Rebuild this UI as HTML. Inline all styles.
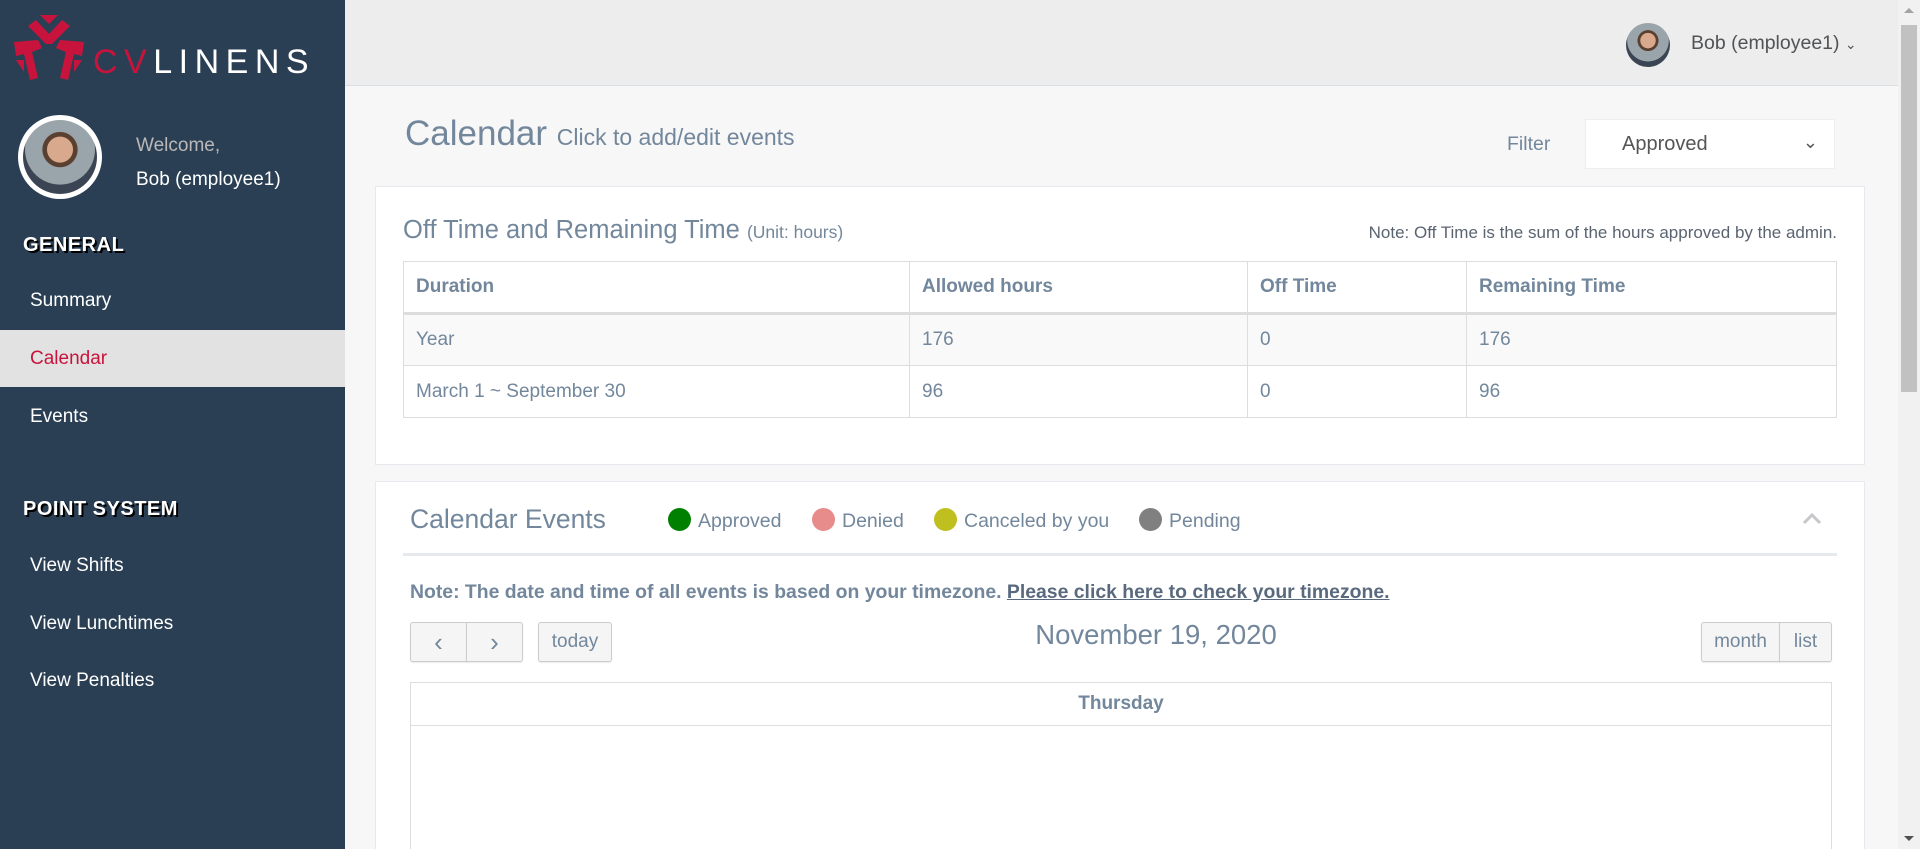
<!DOCTYPE html>
<html><head><meta charset="utf-8"><style>
*{box-sizing:border-box;margin:0;padding:0}
html{overflow:hidden;height:849px}
body{width:1920px;height:849px;overflow:hidden;font-family:"Liberation Sans",Arial,sans-serif;background:#f7f7f7;position:relative;color:#73879c}
.abs{position:absolute}
#side{left:0;top:0;width:345px;height:849px;background:#2a3f54}
.nav{position:absolute;left:0;width:345px;height:57px;line-height:57px;padding-left:30px;color:#fff;font-size:19px}
.sec{position:absolute;left:23px;color:#fff;font-weight:bold;font-size:20px;text-shadow:2px 2px 0 #000;letter-spacing:.5px}
#top{left:345px;top:0;width:1553px;height:86px;background:#ededed;border-bottom:1px solid #d9dee4}
.panel{position:absolute;background:#fff;border:1px solid #e6e9ed}
table{border-collapse:collapse;position:absolute;left:403px;top:261px;width:1434px;font-size:19px}
td,th{border:1px solid #ddd;height:52px;padding:0 12px;text-align:left;color:#73879c}
th{font-weight:bold;border-bottom:3px solid #ddd}
.dot{display:inline-block;width:23px;height:23px;border-radius:50%;vertical-align:-4px;margin-right:7px}
.leg{position:absolute;top:508px;font-size:19.5px}
.btn{position:absolute;border:1px solid #ccc;background:#f5f5f5;border-radius:3px;box-shadow:0 1px 1px rgba(0,0,0,.08);height:40px;top:622px;color:#73879c;font-size:19px;text-align:center;line-height:38px}
</style></head><body>
<div id="side" class="abs">
<svg class="abs" style="left:12px;top:12px" width="75" height="70" viewBox="0 0 75 70">
<g fill="#c8143c">
<path d="M16 14 L24 8 L37 22 L50 8 L58 14 L40 32 L34 32 Z"/>
<path d="M28 3 L46 3 L37 12 Z"/>
<path d="M2 30 L26 28 L30 36 L20 40 L26 66 L18 68 L12 42 L4 44 Z"/>
<path d="M72 30 L48 28 L44 36 L54 40 L48 66 L56 68 L62 42 L70 44 Z"/>
<path d="M4 48 L12 48 L12 60 Z"/><path d="M70 48 L62 48 L62 60 Z"/>
</g></svg>
<div class="abs" style="left:93px;top:42px;font-size:34px;letter-spacing:6.5px;line-height:40px"><span style="color:#c8143c">CV</span><span style="color:#fff">LINENS</span></div>
<div class="abs" style="left:18px;top:115px;width:84px;height:84px;border-radius:50%;background:#fff;padding:5px"><div style="width:74px;height:74px;border-radius:50%;background:radial-gradient(circle at 50% 40%,#d9a98d 0 22%,#5a4030 23% 30%,#9aa5ab 31% 60%,#3a4452 61%)"></div></div>
<div class="abs" style="left:136px;top:135px;font-size:19px;color:#bab8b8">Welcome,</div>
<div class="abs" style="left:136px;top:169px;font-size:19px;color:#fff">Bob (employee1)</div>
<div class="sec" style="top:234px">GENERAL</div>
<div class="nav" style="top:272px">Summary</div>
<div class="nav" style="top:330px;background:#e2e2e2;color:#c8143c">Calendar</div>
<div class="nav" style="top:388px">Events</div>
<div class="sec" style="top:498px">POINT SYSTEM</div>
<div class="nav" style="top:537px">View Shifts</div>
<div class="nav" style="top:595px">View Lunchtimes</div>
<div class="nav" style="top:652px">View Penalties</div>
</div>
<div id="top" class="abs"></div>
<div class="abs" style="left:1626px;top:23px;width:44px;height:44px;border-radius:50%;background:radial-gradient(circle at 50% 40%,#d9a98d 0 22%,#5a4030 23% 30%,#9aa5ab 31% 60%,#3a4452 61%)"></div>
<div class="abs" style="left:1691px;top:32px;font-size:19.5px;color:#515356">Bob (employee1) <span style="font-size:14px">&#8964;</span></div>
<div class="abs" style="left:1898px;top:0;width:22px;height:849px;background:#f1f1f1"><div style="position:absolute;left:3px;top:25px;width:16px;height:367px;background:#c1c1c1"></div><div style="position:absolute;left:6px;top:8px;border:5px solid transparent;border-bottom-color:#a3a3a3;border-top:none"></div><div style="position:absolute;left:6px;bottom:8px;border:5px solid transparent;border-top-color:#505050;border-bottom:none"></div></div>
<div class="abs" style="left:405px;top:114px;font-size:35px">Calendar <span style="font-size:23px">Click to add/edit events</span></div>
<div class="abs" style="left:1507px;top:133px;font-size:19.5px">Filter</div>
<div class="abs" style="left:1585px;top:119px;width:250px;height:50px;background:#fff;border:1px solid #eee;font-size:20px;color:#555;line-height:48px;padding-left:36px">Approved<span style="position:absolute;right:16px;top:-2px;font-size:18px">&#8964;</span></div>
<div class="panel" style="left:375px;top:186px;width:1490px;height:279px"></div>
<div class="abs" style="left:403px;top:216px;font-size:25.5px">Off Time and Remaining Time <span style="font-size:17.5px">(Unit: hours)</span></div>
<div class="abs" style="right:83px;top:223px;font-size:17px;color:#5a6470">Note: Off Time is the sum of the hours approved by the admin.</div>
<table>
<tr><th style="width:506px">Duration</th><th style="width:338px">Allowed hours</th><th style="width:219px">Off Time</th><th>Remaining Time</th></tr>
<tr style="background:#f9f9f9"><td>Year</td><td>176</td><td>0</td><td>176</td></tr>
<tr><td>March 1 ~ September 30</td><td>96</td><td>0</td><td>96</td></tr>
</table>
<div class="panel" style="left:375px;top:481px;width:1490px;height:380px"></div>
<div class="abs" style="left:410px;top:504px;font-size:26.5px">Calendar Events</div>
<div class="leg" style="left:668px"><span class="dot" style="background:#008000"></span>Approved</div>
<div class="leg" style="left:812px"><span class="dot" style="background:#e88b8b"></span>Denied</div>
<div class="leg" style="left:934px"><span class="dot" style="background:#bfbf1f"></span>Canceled by you</div>
<div class="leg" style="left:1139px"><span class="dot" style="background:#808080"></span>Pending</div>
<svg class="abs" style="left:1802px;top:512px" width="20" height="14"><path d="M2 11 L10 3 L18 11" stroke="#c5c7cb" stroke-width="3" fill="none"/></svg>
<div class="abs" style="left:403px;top:553px;width:1434px;height:3px;background:#e6e9ed"></div>
<div class="abs" style="left:410px;top:581px;font-size:19.4px;font-weight:bold">Note: The date and time of all events is based on your timezone. <span style="text-decoration:underline;color:#5a6a7e">Please click here to check your timezone.</span></div>
<div class="btn" style="left:410px;width:57px;border-radius:3px 0 0 3px;font-size:26px">&#8249;</div>
<div class="btn" style="left:466px;width:57px;border-radius:0 3px 3px 0;font-size:26px">&#8250;</div>
<div class="btn" style="left:538px;width:74px">today</div>
<div class="abs" style="left:980px;top:619px;width:352px;text-align:center;font-size:27.5px">November 19, 2020</div>
<div class="btn" style="left:1701px;width:79px;border-radius:3px 0 0 3px">month</div>
<div class="btn" style="left:1779px;width:53px;border-radius:0 3px 3px 0">list</div>
<div class="abs" style="left:410px;top:682px;width:1422px;height:180px;border:1px solid #ddd;background:#fff"></div>
<div class="abs" style="left:410px;top:682px;width:1422px;height:44px;border:1px solid #ddd;text-align:center;line-height:42px;font-weight:bold;font-size:19px">Thursday</div>
</body></html>
